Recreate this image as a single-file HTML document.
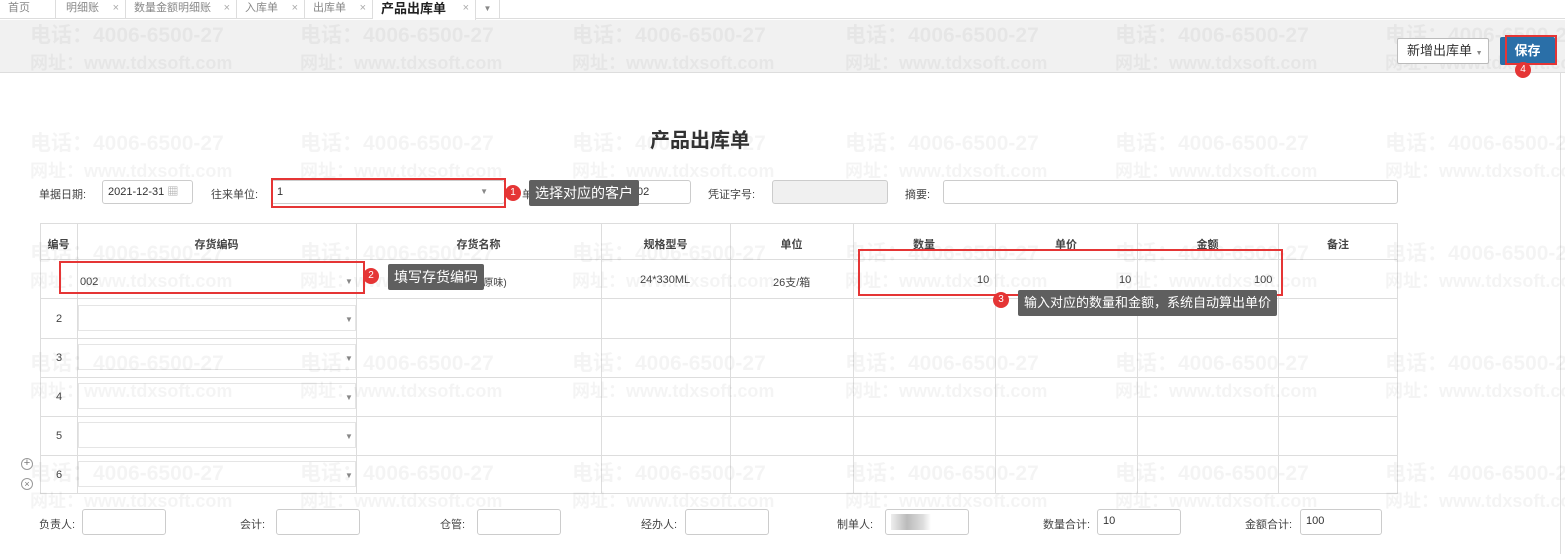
<!DOCTYPE html>
<html><head><meta charset="utf-8"><style>
*{margin:0;padding:0;box-sizing:border-box}
body{width:1565px;height:554px;overflow:hidden;background:#fff;font-family:"Liberation Sans","Noto Sans CJK SC",sans-serif;font-size:12px;color:#333;position:relative}
.a{position:absolute}
.wm{position:absolute;color:rgba(0,0,0,0.045);font-weight:bold;font-size:21px;white-space:nowrap;z-index:5;pointer-events:none}
.tab{position:absolute;top:0;height:19px;line-height:17px;font-size:11px;color:#888;border-right:1px solid #ddd}
.tab i{font-style:normal;color:#aaa;position:absolute;right:6px}
.in{position:absolute;border:1px solid #ccc;border-radius:3px;background:#fff;height:24px;line-height:22px;padding-left:5px;font-size:11px}
.lb{position:absolute;font-size:11px;color:#444}
.vl{position:absolute;top:223px;height:271px;border-left:1px solid #ddd}
.hl{position:absolute;left:40px;width:1358px;border-top:1px solid #ddd}
.th{position:absolute;top:236px;font-size:11px;color:#444;font-weight:bold;text-align:center}
.red{position:absolute;border:2px solid #e53535;z-index:6}
.num{position:absolute;width:16px;height:16px;border-radius:50%;background:#e53535;color:#fff;font-size:10px;text-align:center;line-height:16px;z-index:7}
.tip{position:absolute;background:#5f5f5f;color:#fff;font-size:14px;height:26px;line-height:26px;padding:0 6px;border-radius:2px;z-index:7}
.dd{position:absolute;font-size:8px;color:#888}
</style></head><body>
<div class="a" style="left:0;top:0;width:1565px;height:19px;border-bottom:1px solid #ddd;background:#fff"></div>
<div class="tab" style="left:0;width:56px;padding-left:8px">首页</div>
<div class="tab" style="left:56px;width:70px;padding-left:10px">明细账<i>×</i></div>
<div class="tab" style="left:126px;width:111px;padding-left:8px">数量金额明细账<i>×</i></div>
<div class="tab" style="left:237px;width:68px;padding-left:8px">入库单<i>×</i></div>
<div class="tab" style="left:305px;width:68px;padding-left:8px">出库单<i>×</i></div>
<div class="tab" style="left:373px;width:103px;padding-left:8px;color:#222;font-weight:bold;font-size:13px;background:#fff;height:20px">产品出库单<i style="font-weight:normal;font-size:11px">×</i></div>
<div class="tab" style="left:476px;width:24px;text-align:center;font-size:8px">▼</div>
<div class="a" style="left:0;top:20px;width:1565px;height:53px;background:#f1f1f1;border-bottom:1px solid #ddd"></div>
<div class="a" style="left:1397px;top:38px;width:92px;height:26px;border:1px solid #bbb;background:#fff;border-radius:2px;font-size:13px;line-height:24px;padding-left:9px;z-index:6">新增出库单 <span style="font-size:7px;color:#888">▼</span></div>
<div class="a" style="left:1500px;top:37px;width:55px;height:28px;background:#2a6fa8;border-radius:2px;color:#fff;font-weight:bold;font-size:13px;line-height:28px;text-align:center;z-index:6">保存</div>
<div class="red" style="left:1505px;top:35px;width:52px;height:30px"></div>
<div class="num" style="left:1515px;top:62px">4</div>
<div class="a" style="left:1560px;top:73px;height:481px;border-left:1px solid #ddd"></div>
<div class="a" style="left:650px;top:124px;font-size:20px;font-weight:bold;color:#333">产品出库单</div>
<div class="lb" style="left:39px;top:186px">单据日期:</div>
<div class="in" style="left:102px;top:180px;width:91px">2021-12-31 <span style="color:#999">▦</span></div>
<div class="lb" style="left:211px;top:186px">往来单位:</div>
<div class="in" style="left:271px;top:180px;width:234px">1<span class="dd" style="right:16px;top:0">▼</span></div>
<div class="red" style="left:271px;top:178px;width:235px;height:30px"></div>
<div class="num" style="left:505px;top:185px">1</div>
<div class="lb" style="left:522px;top:186px">单号:</div>
<div class="in" style="left:590px;top:180px;width:101px">SCK20002</div>
<div class="tip" style="left:529px;top:180px">选择对应的客户</div>
<div class="lb" style="left:708px;top:186px">凭证字号:</div>
<div class="in" style="left:772px;top:180px;width:116px;background:#f0f0f0"></div>
<div class="lb" style="left:905px;top:186px">摘要:</div>
<div class="in" style="left:943px;top:180px;width:455px"></div>
<div class="a" style="left:40px;top:223px;width:1358px;height:271px;border:1px solid #ddd"></div>
<div class="hl" style="top:259px"></div><div class="hl" style="top:298px"></div><div class="hl" style="top:338px"></div><div class="hl" style="top:377px"></div><div class="hl" style="top:416px"></div><div class="hl" style="top:455px"></div>
<div class="vl" style="left:77px"></div><div class="vl" style="left:356px"></div><div class="vl" style="left:601px"></div><div class="vl" style="left:730px"></div><div class="vl" style="left:853px"></div><div class="vl" style="left:995px"></div><div class="vl" style="left:1137px"></div><div class="vl" style="left:1278px"></div>
<div class="th" style="left:40px;width:37px">编号</div>
<div class="th" style="left:77px;width:279px">存货编码</div>
<div class="th" style="left:356px;width:245px">存货名称</div>
<div class="th" style="left:601px;width:129px">规格型号</div>
<div class="th" style="left:730px;width:123px">单位</div>
<div class="th" style="left:853px;width:142px">数量</div>
<div class="th" style="left:995px;width:142px">单价</div>
<div class="th" style="left:1137px;width:141px">金额</div>
<div class="th" style="left:1278px;width:120px">备注</div>
<div class="lb" style="left:80px;top:276px">002</div><span class="dd" style="left:345px;top:277px">▼</span>
<div class="lb" style="left:480px;top:274px;font-size:10px">(原味)</div>
<div class="lb" style="left:640px;top:274px">24*330ML</div>
<div class="lb" style="left:773px;top:274px">26支/箱</div>
<div class="lb" style="left:977px;top:274px">10</div>
<div class="lb" style="left:1119px;top:274px">10</div>
<div class="lb" style="left:1254px;top:274px">100</div>
<div class="red" style="left:59px;top:261px;width:306px;height:33px"></div>
<div class="num" style="left:363px;top:268px">2</div>
<div class="tip" style="left:388px;top:264px">填写存货编码</div>
<div class="red" style="left:858px;top:249px;width:425px;height:47px"></div>
<div class="num" style="left:993px;top:292px">3</div>
<div class="tip" style="left:1018px;top:290px;font-size:13px">输入对应的数量和金额，系统自动算出单价</div>
<div class="lb" style="left:56px;top:313px">2</div><div class="a" style="left:78px;top:305px;width:278px;height:26px;border:1px solid #e5e5e5"></div><span class="dd" style="left:345px;top:315px">▼</span>
<div class="lb" style="left:56px;top:352px">3</div><div class="a" style="left:78px;top:344px;width:278px;height:26px;border:1px solid #e5e5e5"></div><span class="dd" style="left:345px;top:354px">▼</span>
<div class="lb" style="left:56px;top:391px">4</div><div class="a" style="left:78px;top:383px;width:278px;height:26px;border:1px solid #e5e5e5"></div><span class="dd" style="left:345px;top:393px">▼</span>
<div class="lb" style="left:56px;top:430px">5</div><div class="a" style="left:78px;top:422px;width:278px;height:26px;border:1px solid #e5e5e5"></div><span class="dd" style="left:345px;top:432px">▼</span>
<div class="lb" style="left:56px;top:469px">6</div><div class="a" style="left:78px;top:461px;width:278px;height:26px;border:1px solid #e5e5e5"></div><span class="dd" style="left:345px;top:471px">▼</span>
<div class="a" style="left:21px;top:458px;width:12px;height:12px;border:1px solid #999;border-radius:50%;font-size:11px;line-height:9px;text-align:center;color:#777">+</div>
<div class="a" style="left:21px;top:478px;width:12px;height:12px;border:1px solid #999;border-radius:50%;font-size:9px;line-height:10px;text-align:center;color:#777">×</div>
<div class="lb" style="left:39px;top:516px">负责人:</div><div class="in" style="left:82px;top:509px;width:84px;height:26px"></div>
<div class="lb" style="left:240px;top:516px">会计:</div><div class="in" style="left:276px;top:509px;width:84px;height:26px"></div>
<div class="lb" style="left:440px;top:516px">仓管:</div><div class="in" style="left:477px;top:509px;width:84px;height:26px"></div>
<div class="lb" style="left:641px;top:516px">经办人:</div><div class="in" style="left:685px;top:509px;width:84px;height:26px"></div>
<div class="lb" style="left:837px;top:516px">制单人:</div><div class="in" style="left:885px;top:509px;width:84px;height:26px"><div class="a" style="left:5px;top:4px;width:40px;height:16px;background:linear-gradient(90deg,#eee,#bbb 40%,#ddd 80%,#fff)"></div></div>
<div class="lb" style="left:1043px;top:516px">数量合计:</div><div class="in" style="left:1097px;top:509px;width:84px;height:26px">10</div>
<div class="lb" style="left:1245px;top:516px">金额合计:</div><div class="in" style="left:1300px;top:509px;width:82px;height:26px">100</div>
<div id="w"></div>
<script>
var xs=[30,300,572,845,1115,1385],ys=[19,127,237,347,457];var h='';
xs.forEach(function(x){ys.forEach(function(y){h+='<div class="wm" style="left:'+x+'px;top:'+y+'px">电话：4006-6500-27</div><div class="wm" style="left:'+x+'px;top:'+(y+30)+'px;font-size:18px">网址：www.tdxsoft.com</div>';});});
document.getElementById('w').innerHTML=h;
</script>
</body></html>
